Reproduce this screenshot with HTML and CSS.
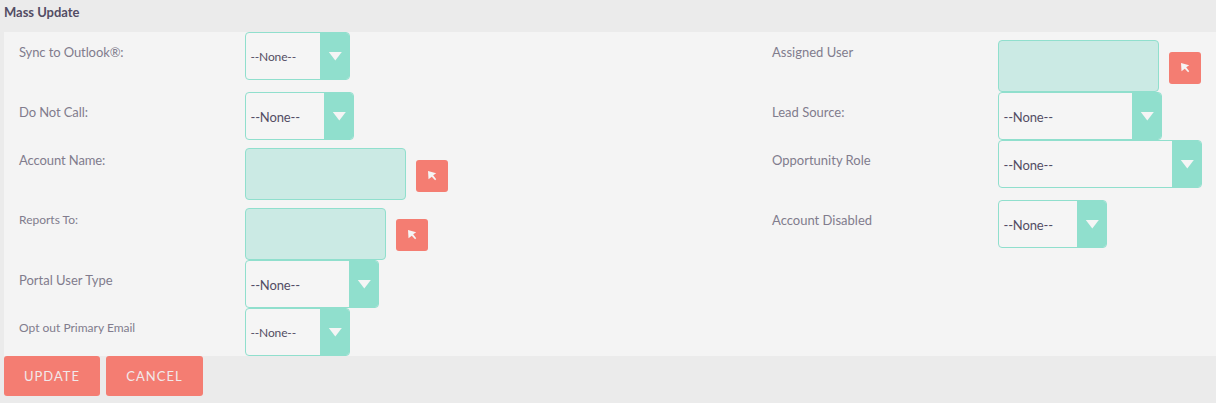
FILE: index.html
```
<!DOCTYPE html>
<html lang="en">
<head>
<meta charset="utf-8">
<title>Mass Update</title>
<link rel="stylesheet" href="styles.css">
</head>
<body>
<svg width="0" height="0" class="defs">
  <symbol id="cursor" viewBox="0 0 9 10"><path d="M0 0 8.2 2.2 5.2 4.2 8.2 8.2 7.1 9.2 3.8 5.7 0.5 8.2z" fill="#f5f5f5"/></symbol>
  <symbol id="caret" viewBox="0 0 14 9"><path d="M0.8 0h13L7.3 8.6z" fill="#f5f5f5"/></symbol>
</svg>
<h1 class="title">Mass Update</h1>
<form class="form">
  <div class="panel">
    <label class="label tight">Sync to Outlook®:</label>
    <div class="field"><div class="select small"><span class="value">--None--</span><span class="arrow"><svg><use href="#caret"/></svg></span></div></div>
    <label class="label">Assigned User</label>
    <div class="field lookup"><input class="input" type="text"><button class="pick" type="button"><svg><use href="#cursor"/></svg></button></div>

    <label class="label tight">Do Not Call:</label>
    <div class="field"><div class="select"><span class="value">--None--</span><span class="arrow"><svg><use href="#caret"/></svg></span></div></div>
    <label class="label">Lead Source:</label>
    <div class="field"><div class="select source"><span class="value">--None--</span><span class="arrow"><svg><use href="#caret"/></svg></span></div></div>

    <label class="label tight">Account Name:</label>
    <div class="field lookup"><input class="input" type="text"><button class="pick" type="button"><svg><use href="#cursor"/></svg></button></div>
    <label class="label">Opportunity Role</label>
    <div class="field"><div class="select role"><span class="value">--None--</span><span class="arrow"><svg><use href="#caret"/></svg></span></div></div>

    <label class="label compact">Reports To:</label>
    <div class="field lookup"><input class="input narrow" type="text"><button class="pick raised" type="button"><svg><use href="#cursor"/></svg></button></div>
    <label class="label">Account Disabled</label>
    <div class="field"><div class="select"><span class="value">--None--</span><span class="arrow"><svg><use href="#caret"/></svg></span></div></div>

    <label class="label">Portal User Type</label>
    <div class="field"><div class="select portal"><span class="value">--None--</span><span class="arrow"><svg><use href="#caret"/></svg></span></div></div>
    <span></span><span></span>

    <label class="label compact">Opt out Primary Email</label>
    <div class="field"><div class="select small"><span class="value">--None--</span><span class="arrow"><svg><use href="#caret"/></svg></span></div></div>
  </div>
  <div class="actions">
    <button class="button update" type="button">UPDATE</button>
    <button class="button cancel" type="button">CANCEL</button>
  </div>
</form>
</body>
</html>
```
FILE: styles.css
```
* { box-sizing: border-box; }
body {
  margin: 0;
  height: 403px;
  padding-left: 4px;
  background: #ebebeb;
  color: #534d64;
  font-family: Lato, sans-serif;
  font-size: 13px;
  overflow: hidden;
}
.defs { display: none; }
.title {
  margin: 0;
  height: 32px;
  padding-top: 4px;
  font-size: 13px;
  line-height: 17px;
  font-weight: 700;
  letter-spacing: -0.02px;
}
.form { margin: 0; }
.panel {
  display: grid;
  grid-template-columns: 241px 512px 241px 1fr;
  grid-template-rows: 60px 48px 60px 60px 48px 48px;
  background: #f4f4f4;
}
.label {
  padding: 10px 0 0 15px;
  line-height: 20px;
  color: #817c8d;
}
.label.tight { letter-spacing: -0.1px; }
.label.compact { font-size: 12px; }
.field { display: flex; align-items: flex-start; }
.lookup { padding-top: 8px; gap: 10px; }
.input {
  width: 161px;
  height: 52px;
  margin: 0;
  border: 1px solid #90dfcd;
  border-radius: 4px;
  background: #cbeae4;
}
.input.narrow { width: 141px; }
.pick {
  display: flex;
  width: 32px;
  height: 32px;
  margin-top: 12px;
  padding: 11px 0 0 12px;
  border: 0;
  border-radius: 3px;
  background: #f47d72;
}
.pick.raised { margin-top: 11px; }
.pick svg { width: 9px; height: 10px; }
.select {
  display: flex;
  width: 109px;
  height: 48px;
  border: 1px solid #90dfcd;
  border-radius: 4px;
  background: #f5f5f5;
  overflow: hidden;
}
.select.small { width: 105px; font-size: 12px; }
.select.source { width: 164px; }
.select.role { width: 204px; }
.select.portal { width: 134px; }
.value { flex: 1; padding-left: 4.5px; line-height: 48px; letter-spacing: -0.15px; }
.select.small .value { line-height: 47px; }
.arrow {
  width: 29px;
  padding: 19px 0 0 8px;
  background: #90dfcd;
}
.arrow svg { display: block; width: 14px; height: 9px; }
.actions { display: flex; gap: 6px; }
.button {
  height: 40px;
  padding: 0;
  border: 0;
  border-radius: 3px;
  background: #f47d72;
  color: #f1e9ea;
  font-family: inherit;
  font-size: 13px;
  letter-spacing: 1px;
}
.update { width: 96px; }
.cancel { width: 97px; }
```
